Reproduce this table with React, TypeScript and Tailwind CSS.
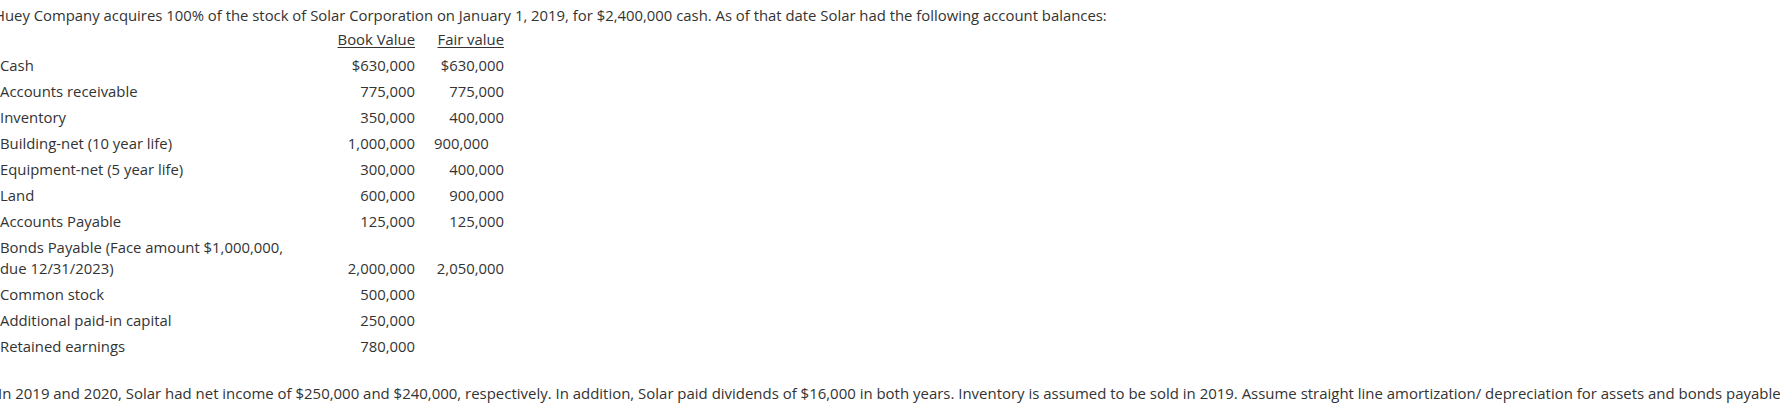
type Row = {
  label: string;
  book: string;
  fair?: string;
  fairLeft?: boolean;
};

const rows: Row[] = [
  { label: "Cash", book: "$630,000", fair: "$630,000" },
  { label: "Accounts receivable", book: "775,000", fair: "775,000" },
  { label: "Inventory", book: "350,000", fair: "400,000" },
  { label: "Building-net (10 year life)", book: "1,000,000", fair: "900,000", fairLeft: true },
  { label: "Equipment-net (5 year life)", book: "300,000", fair: "400,000" },
  { label: "Land", book: "600,000", fair: "900,000" },
  { label: "Accounts Payable", book: "125,000", fair: "125,000" },
  { label: "Bonds Payable (Face amount $1,000,000, due 12/31/2023)", book: "2,000,000", fair: "2,050,000" },
  { label: "Common stock", book: "500,000" },
  { label: "Additional paid-in capital", book: "250,000" },
  { label: "Retained earnings", book: "780,000" },
];

export default function App() {
  return (
    <div className="h-[420px] w-[1780px] overflow-hidden bg-white pt-[5px] font-['Open_Sans',sans-serif] text-[14.87px] leading-[21px] text-[#333333]">
      <p className="-ml-[6px] whitespace-nowrap">
        Huey Company acquires 100% of the stock of Solar Corporation on January 1, 2019, for $2,400,000 cash. As of that
        date Solar had the following account balances:
      </p>

      <table className="border-collapse">
        <tbody>
          <tr>
            <td className="w-[300px] p-0 py-[2.5px]"></td>
            <td className="w-[115px] p-0 py-[2.5px] text-right">
              <span className="underline decoration-1 underline-offset-[2px]">Book Value</span>
            </td>
            <td className="w-[89px] p-0 py-[2.5px] text-right">
              <span className="underline decoration-1 underline-offset-[2px]">Fair value</span>
            </td>
          </tr>
          {rows.map((r) => (
            <tr key={r.label}>
              <td className="w-[300px] p-0 py-[2.5px] align-top">{r.label}</td>
              <td className="p-0 py-[2.5px] text-right align-bottom">{r.book}</td>
              <td
                className={
                  r.fairLeft
                    ? "p-0 py-[2.5px] pl-[19px] text-left align-bottom"
                    : "p-0 py-[2.5px] text-right align-bottom"
                }
              >
                {r.fair ?? ""}
              </td>
            </tr>
          ))}
        </tbody>
      </table>

      <p className="-ml-[2px] mt-[24px] whitespace-nowrap text-[14.96px]">
        In 2019 and 2020, Solar had net income of $250,000 and $240,000, respectively. In addition, Solar paid dividends
        of $16,000 in both years. Inventory is assumed to be sold in 2019. Assume straight line amortization/ depreciation
        for assets and bonds payable.
      </p>
    </div>
  );
}
